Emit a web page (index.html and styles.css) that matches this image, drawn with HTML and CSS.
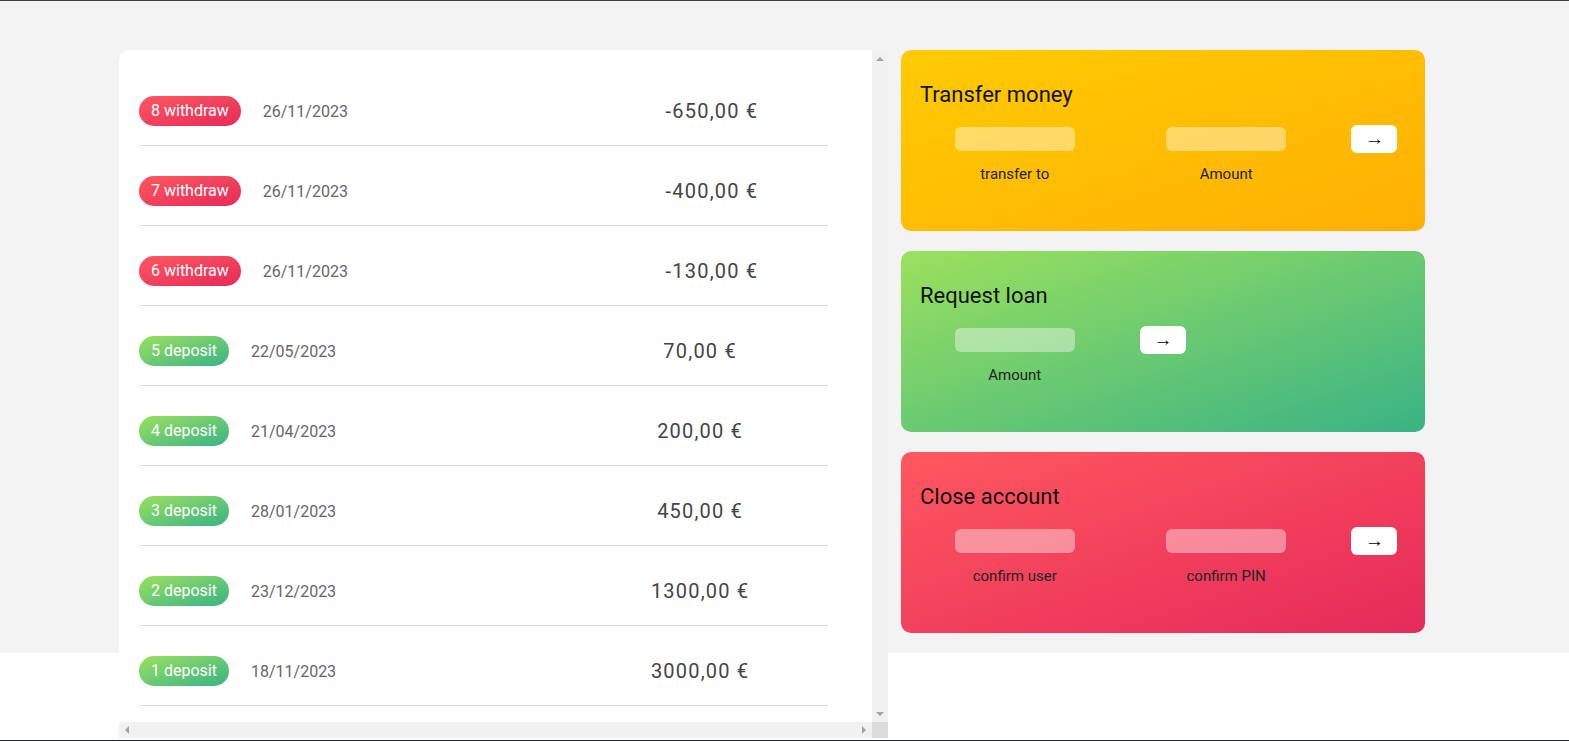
FILE: index.html
```html
<!DOCTYPE html>
<html lang="en">
<head>
<meta charset="utf-8">
<title>Bankist</title>
<link rel="stylesheet" href="styles.css">
</head>
<body>
<main class="app">
  <div class="movements">
    <div class="movements__list">
      <div class="mov-row">
        <span class="mov-type mov-type--withdrawal">8 withdraw</span>
        <span class="mov-date">26/11/2023</span>
        <span class="mov-value">-650,00 €</span>
      </div>
      <div class="mov-row">
        <span class="mov-type mov-type--withdrawal">7 withdraw</span>
        <span class="mov-date">26/11/2023</span>
        <span class="mov-value">-400,00 €</span>
      </div>
      <div class="mov-row">
        <span class="mov-type mov-type--withdrawal">6 withdraw</span>
        <span class="mov-date">26/11/2023</span>
        <span class="mov-value">-130,00 €</span>
      </div>
      <div class="mov-row">
        <span class="mov-type mov-type--deposit">5 deposit</span>
        <span class="mov-date">22/05/2023</span>
        <span class="mov-value">70,00 €</span>
      </div>
      <div class="mov-row">
        <span class="mov-type mov-type--deposit">4 deposit</span>
        <span class="mov-date">21/04/2023</span>
        <span class="mov-value">200,00 €</span>
      </div>
      <div class="mov-row">
        <span class="mov-type mov-type--deposit">3 deposit</span>
        <span class="mov-date">28/01/2023</span>
        <span class="mov-value">450,00 €</span>
      </div>
      <div class="mov-row">
        <span class="mov-type mov-type--deposit">2 deposit</span>
        <span class="mov-date">23/12/2023</span>
        <span class="mov-value">1300,00 €</span>
      </div>
      <div class="mov-row">
        <span class="mov-type mov-type--deposit">1 deposit</span>
        <span class="mov-date">18/11/2023</span>
        <span class="mov-value">3000,00 €</span>
      </div>
    </div>
    <div class="scrollbar scrollbar--v">
      <span class="scroll-btn"><span class="tri tri--up"></span></span>
      <span class="scroll-track"></span>
      <span class="scroll-btn"><span class="tri tri--down"></span></span>
    </div>
    <div class="scrollbar scrollbar--h">
      <span class="scroll-btn"><span class="tri tri--left"></span></span>
      <span class="scroll-track"></span>
      <span class="scroll-btn"><span class="tri tri--right"></span></span>
    </div>
    <div class="scroll-corner"></div>
  </div>

  <div class="operations">
    <section class="operation operation--transfer">
      <h2 class="op-title">Transfer money</h2>
      <form class="form form--3col">
        <input type="text" class="form__input">
        <input type="text" class="form__input">
        <button type="button" class="form__btn">→</button>
        <label class="form__label">transfer to</label>
        <label class="form__label">Amount</label>
      </form>
    </section>
    <section class="operation operation--loan">
      <h2 class="op-title">Request loan</h2>
      <form class="form form--loan">
        <input type="number" class="form__input">
        <button type="button" class="form__btn">→</button>
        <label class="form__label">Amount</label>
      </form>
    </section>
    <section class="operation operation--close">
      <h2 class="op-title">Close account</h2>
      <form class="form form--3col">
        <input type="text" class="form__input">
        <input type="password" class="form__input">
        <button type="button" class="form__btn">→</button>
        <label class="form__label">confirm user</label>
        <label class="form__label">confirm PIN</label>
      </form>
    </section>
  </div>
</main>
<div class="frame-bottom"></div>
</body>
</html>
```

FILE: styles.css
```css
* {
  box-sizing: border-box;
}

html {
  background: #ffffff;
}

body {
  margin: 0;
  border-top: 1px solid #3b3b3b;
  font-family: Roboto, "Liberation Sans", sans-serif;
  color: #333;
  overflow: hidden;
  height: 741px;
}

.app {
  display: grid;
  grid-template-columns: 769px 524px;
  column-gap: 13px;
  align-items: start;
  height: 652px;
  padding: 49px 0 0 119px;
  background: #f3f3f3;
}

/* Movements */
.movements {
  height: 688px;
  background: #ffffff;
  border-radius: 10px 0 0 0;
  overflow: hidden;
  display: grid;
  grid-template-columns: 753px 16px;
  grid-template-rows: 672px 16px;
}

.movements__list {
  overflow: hidden;
  padding: 16px 44px 0 20px;
}

.mov-row {
  display: flex;
  align-items: center;
  padding: 30px 0 19px;
  border-bottom: 1px solid #dcdcdc;
}

.mov-type {
  flex-shrink: 0;
  height: 30px;
  line-height: 30px;
  padding: 0 12px;
  border-radius: 15px;
  font-size: 16px;
  color: #ffffff;
}

.mov-type--withdrawal {
  background-image: linear-gradient(to top left, #e52a5a, #ff585f);
}

.mov-type--deposit {
  background-image: linear-gradient(to top left, #39b385, #9be15d);
}

.mov-date {
  flex-shrink: 0;
  margin-left: 22px;
  font-size: 16px;
  color: #666;
}

.mov-value {
  flex-shrink: 0;
  width: 200px;
  margin-left: 264px;
  text-align: center;
  font-size: 20px;
  letter-spacing: 1.2px;
  color: #444;
}

/* Scrollbars */
.scrollbar {
  display: flex;
  background: #f1f1f1;
}

.scrollbar--v {
  flex-direction: column;
}

.scroll-btn {
  flex: 0 0 16px;
  width: 16px;
  height: 16px;
  display: flex;
  align-items: center;
  justify-content: center;
}

.scroll-track {
  flex: 1;
}

.scroll-corner {
  background: #dcdcdc;
}

.tri {
  width: 0;
  height: 0;
}

.tri--up {
  border-left: 4px solid transparent;
  border-right: 4px solid transparent;
  border-bottom: 4px solid #a3a3a3;
  margin-top: 2px;
}

.tri--down {
  border-left: 4px solid transparent;
  border-right: 4px solid transparent;
  border-top: 4px solid #a3a3a3;
  margin-bottom: 0;
}

.tri--left {
  border-top: 4px solid transparent;
  border-bottom: 4px solid transparent;
  border-right: 4px solid #a3a3a3;
}

.tri--right {
  border-top: 4px solid transparent;
  border-bottom: 4px solid transparent;
  border-left: 4px solid #a3a3a3;
}

/* Operations */
.operations {
  display: flex;
  flex-direction: column;
  gap: 20px;
}

.operation {
  height: 181px;
  border-radius: 10px;
  padding: 32px 19px 0;
}

.operation--transfer {
  background-image: linear-gradient(to top left, #ffb003, #ffcb03);
}

.operation--loan {
  background-image: linear-gradient(to top left, #39b385, #9be15d);
}

.operation--close {
  background-image: linear-gradient(to top left, #e52a5a, #ff585f);
}

.op-title {
  margin: 0 0 17px;
  font-size: 22px;
  line-height: 26px;
  font-weight: 400;
  color: #111;
}

.form {
  display: grid;
  column-gap: 22px;
  row-gap: 12px;
  grid-template-rows: 28px auto;
  align-items: center;
  justify-items: center;
  margin: 0;
}

.form--3col {
  grid-template-columns: 3fr 3fr 1fr;
}

.form--loan {
  grid-template-columns: 3fr 1fr 3fr;
}

.form--loan .form__label {
  grid-row: 2;
  grid-column: 1;
}

.form__input {
  width: 120px;
  height: 24px;
  border: none;
  border-radius: 6px;
  background-color: rgba(255, 255, 255, 0.4);
  font-family: inherit;
  font-size: 15px;
  padding: 0 10px;
  outline: none;
}

.form__btn {
  width: 46px;
  height: 28px;
  border: none;
  border-radius: 6px;
  background: #ffffff;
  font-size: 19px;
  line-height: 1;
  padding: 0 0 2px;
  color: #000;
  font-family: "Liberation Sans", sans-serif;
}

.form__label {
  font-size: 15px;
  line-height: 18px;
  color: #222;
}

.frame-bottom {
  position: fixed;
  left: 0;
  right: 0;
  bottom: 0;
  height: 1px;
  background: #1f2b38;
}
```
